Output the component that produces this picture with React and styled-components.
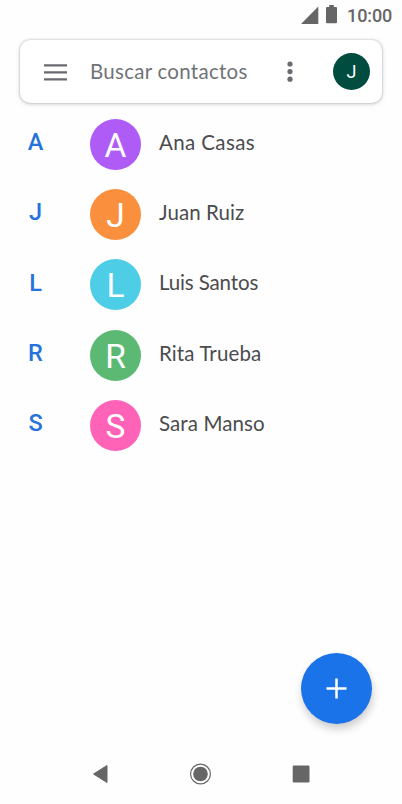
import React from "react";
import styled, { createGlobalStyle } from "styled-components";

const GlobalStyle = createGlobalStyle`
    body {
        margin: 0;
        background-color: #fff;
        font-family: Lato, "Liberation Sans", sans-serif;
    }
    * {
        box-sizing: border-box;
    }
`;

const Screen = styled.div`
    display: flex;
    flex-direction: column;
    width: 402px;
    height: 804px;
    overflow: hidden;
    background-color: #fefefe;
`;

const StatusBar = styled.header`
    display: flex;
    justify-content: flex-end;
    height: 40px;
    padding-right: 10px;
`;

const Clock = styled.span`
    width: 45px;
    margin-left: 1px;
    font-family: Roboto, sans-serif;
    font-size: 18px;
    font-weight: 500;
    line-height: 31px;
    letter-spacing: -0.1px;
    white-space: nowrap;
    color: #666;
`;

const SearchBar = styled.div`
    display: flex;
    align-items: center;
    flex-shrink: 0;
    height: 63px;
    margin: 0 20px;
    padding: 0 12px 0 24px;
    border-radius: 10px;
    background-color: #fff;
    box-shadow: 0 0 2px rgba(60, 64, 67, 0.35), 0 1px 4px rgba(60, 64, 67, 0.25);
`;

const IconButton = styled.button`
    display: flex;
    padding: 0;
    border: 0;
    background: none;
`;

const SearchText = styled.span`
    flex: 1;
    margin-left: 22px;
    padding-bottom: 1px;
    font-size: 20.5px;
    line-height: 26px;
    letter-spacing: 0.27px;
    white-space: nowrap;
    color: #717377;
`;

const Account = styled.span`
    width: 37px;
    height: 37px;
    margin-left: 40px;
    border-radius: 50%;
    background-color: #004d40;
    color: #fff;
    font-family: Roboto, sans-serif;
    font-size: 18px;
    line-height: 37px;
    text-align: center;
`;

const ContactList = styled.ul`
    flex: 1;
    margin: 0;
    padding: 6px 0 0;
    list-style: none;
`;

const Contact = styled.li`
    display: grid;
    grid-template-columns: 71px 51px 1fr;
    align-items: center;
    height: 70.33px;
    padding: 0 20px 0 0;
`;

const Initial = styled.span`
    padding-bottom: 4px;
    font-family: Roboto, sans-serif;
    font-size: 23.5px;
    font-weight: 500;
    line-height: 28px;
    text-align: center;
    color: #2673dc;
`;

const Avatar = styled.span`
    width: 51px;
    height: 51px;
    margin-left: 19px;
    border-radius: 50%;
    background-color: ${({ color }) => color};
    color: #fff;
    font-family: Roboto, sans-serif;
    font-size: 33.5px;
    line-height: 53px;
    text-align: center;
`;

const Name = styled.span`
    padding: 0 0 5px 37px;
    font-size: 20.5px;
    line-height: 26px;
    letter-spacing: ${({ $spacing }) => $spacing}px;
    color: #4b4c4e;
`;

const AddButton = styled.button`
    display: flex;
    align-items: center;
    justify-content: center;
    align-self: flex-end;
    flex-shrink: 0;
    width: 71px;
    height: 71px;
    margin-right: 30px;
    padding: 0;
    border: 0;
    border-radius: 50%;
    background-color: #1a73e8;
    box-shadow: 1px 5px 9px rgba(0, 0, 0, 0.2);
`;

const NavBar = styled.nav`
    display: flex;
    justify-content: space-between;
    flex-shrink: 0;
    height: 80px;
    padding: 38px 90px 0 89px;
`;

const contacts = [
    { name: "Ana Casas", color: "#af5cf7", spacing: 0.38 },
    { name: "Juan Ruiz", color: "#fa903e", spacing: 0.06 },
    { name: "Luis Santos", color: "#4ecde6", spacing: -0.14 },
    { name: "Rita Trueba", color: "#5bb974", spacing: 0.12 },
    { name: "Sara Manso", color: "#ff63b8", spacing: 0.1 },
];

const App = () => {
    return (
        <>
            <GlobalStyle />
            <Screen>
                <StatusBar>
                    <svg width="46" height="30" fill="#666">
                        <path d="M18.3 6.5V24H1Z" />
                        <path d="M29.2 5h4.6v2h2.2q1 0 1 1v14.2q0 1-1 1h-9q-1 0-1-1V8q0-1 1-1h2.2z" />
                    </svg>
                    <Clock>10:00</Clock>
                </StatusBar>
                <SearchBar>
                    <IconButton aria-label="Menú">
                        <svg width="24" height="18" fill="#6a6b70">
                            <path d="M0 1.2h23v2.4H0zM0 8.2h23v2.4H0zM0 15.2h23v2.4H0z" />
                        </svg>
                    </IconButton>
                    <SearchText>Buscar contactos</SearchText>
                    <IconButton aria-label="Más opciones">
                        <svg width="6" height="22" fill="#6a6b70">
                            <circle cx="3" cy="3" r="2.6" />
                            <circle cx="3" cy="10.6" r="2.6" />
                            <circle cx="3" cy="18.2" r="2.6" />
                        </svg>
                    </IconButton>
                    <Account>J</Account>
                </SearchBar>
                <ContactList>
                    {contacts.map(({ name, color, spacing }) => (
                        <Contact key={name}>
                            <Initial>{name[0]}</Initial>
                            <Avatar color={color}>{name[0]}</Avatar>
                            <Name $spacing={spacing}>{name}</Name>
                        </Contact>
                    ))}
                </ContactList>
                <AddButton aria-label="Añadir contacto">
                    <svg width="21" height="21" stroke="#fff" strokeWidth="2.5">
                        <path d="M0.5 10.5h20M10.5 0.5v20" />
                    </svg>
                </AddButton>
                <NavBar>
                    <svg width="22" height="24" fill="#666">
                        <path d="M18 3.5v17L4.5 12Z" stroke="#666" strokeLinejoin="round" />
                    </svg>
                    <svg width="24" height="24" fill="#666">
                        <circle cx="11.5" cy="12" r="9.9" fill="none" stroke="#666" strokeWidth="1.2" />
                        <circle cx="11.5" cy="12" r="7.3" />
                    </svg>
                    <svg width="22" height="24" fill="#666">
                        <rect x="2.7" y="3.5" width="16.8" height="17" rx="1.2" />
                    </svg>
                </NavBar>
            </Screen>
        </>
    );
};

export default App;
